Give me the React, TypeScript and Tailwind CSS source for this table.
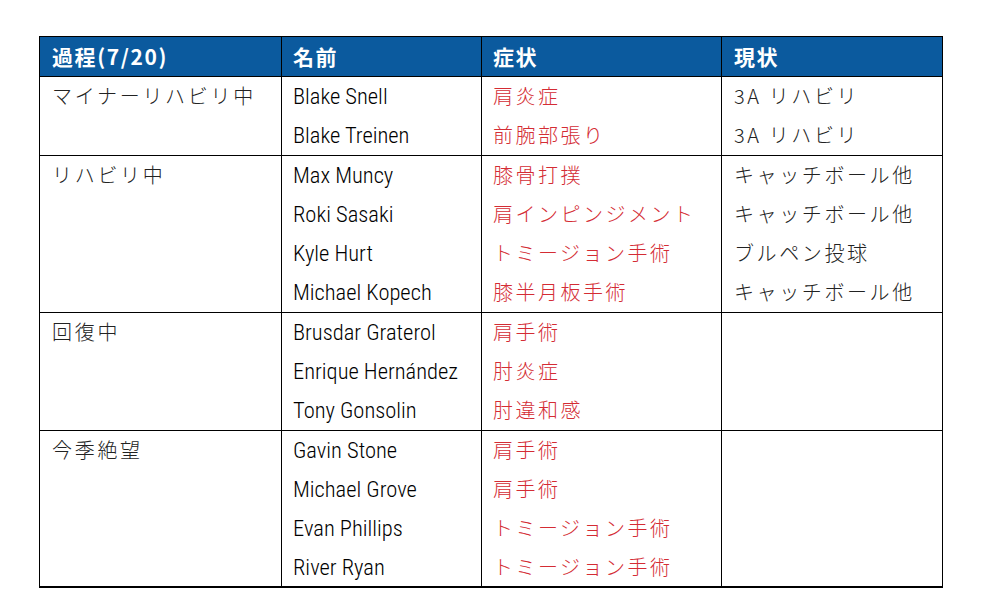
const groups = [
  {
    label: 'マイナーリハビリ中',
    rows: [
      { name: 'Blake Snell', injury: '肩炎症', status: '3A リハビリ' },
      { name: 'Blake Treinen', injury: '前腕部張り', status: '3A リハビリ' },
    ],
  },
  {
    label: 'リハビリ中',
    rows: [
      { name: 'Max Muncy', injury: '膝骨打撲', status: 'キャッチボール他' },
      { name: 'Roki Sasaki', injury: '肩インピンジメント', status: 'キャッチボール他' },
      { name: 'Kyle Hurt', injury: 'トミージョン手術', status: 'ブルペン投球' },
      { name: 'Michael Kopech', injury: '膝半月板手術', status: 'キャッチボール他' },
    ],
  },
  {
    label: '回復中',
    rows: [
      { name: 'Brusdar Graterol', injury: '肩手術', status: '' },
      { name: 'Enrique Hernández', injury: '肘炎症', status: '' },
      { name: 'Tony Gonsolin', injury: '肘違和感', status: '' },
    ],
  },
  {
    label: '今季絶望',
    rows: [
      { name: 'Gavin Stone', injury: '肩手術', status: '' },
      { name: 'Michael Grove', injury: '肩手術', status: '' },
      { name: 'Evan Phillips', injury: 'トミージョン手術', status: '' },
      { name: 'River Ryan', injury: 'トミージョン手術', status: '' },
    ],
  },
]

const jp = "font-['Noto_Sans_CJK_JP',sans-serif]"

export default function App() {
  return (
    <div className="min-h-screen bg-white pt-[36px] pl-[39px]">
      <table className="w-[903px] table-fixed border-collapse border-b-2 border-black">
        <colgroup>
          <col className="w-[242px]" />
          <col className="w-[200px]" />
          <col className="w-[240px]" />
          <col className="w-[221px]" />
        </colgroup>
        <thead>
          <tr className={`h-[40px] bg-[#0b5a9e] text-left text-[21px] tracking-[1.6px] text-white ${jp}`}>
            <th className="border border-black pl-[12px] font-bold">過程(7/20)</th>
            <th className="border border-black pl-[11px] font-bold">名前</th>
            <th className="border border-black pl-[11px] font-bold">症状</th>
            <th className="border border-black pl-[12px] font-bold">現状</th>
          </tr>
        </thead>
        <tbody>
          {groups.map((g) =>
            g.rows.map((r, i) => (
              <tr key={r.name} className={`h-[39.3px] ${i === 0 ? 'border-t border-black' : ''}`}>
                {i === 0 && (
                  <td
                    rowSpan={g.rows.length}
                    className={`border-x border-black pl-[12px] pt-[4px] align-top text-[20px] font-light tracking-[2.7px] text-[#222] ${jp}`}
                  >
                    {g.label}
                  </td>
                )}
                <td className="border-x border-black pl-[11px] font-['Roboto_Condensed',Roboto,sans-serif] text-[22.5px] font-[350] leading-none text-black">
                  {r.name}
                </td>
                <td className={`border-x border-black pl-[11px] text-[20px] font-light tracking-[2.5px] text-[#d42c34] ${jp}`}>
                  {r.injury}
                </td>
                <td className={`border-x border-black pl-[12px] text-[20px] font-light tracking-[2.6px] text-[#222] ${jp}`}>
                  {r.status}
                </td>
              </tr>
            ))
          )}
        </tbody>
      </table>
    </div>
  )
}
